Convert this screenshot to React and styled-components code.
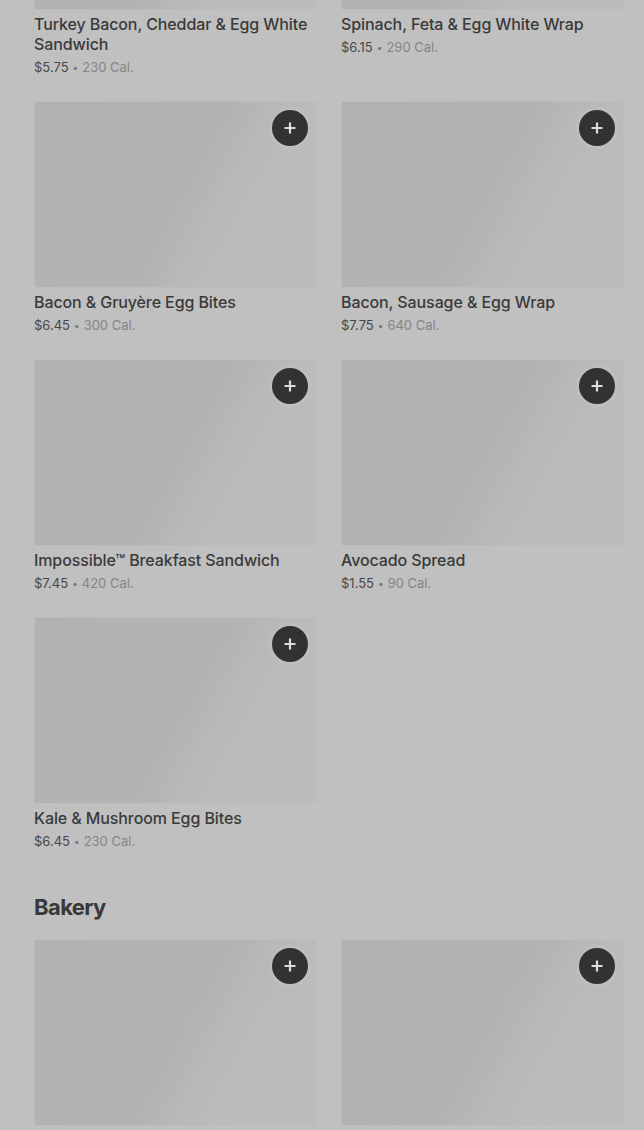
import * as React from 'react';
import styled, { createGlobalStyle } from 'styled-components';

const breakfast = [
  { name: 'Turkey Bacon, Cheddar & Egg White Sandwich', price: '$5.75', cal: '230 Cal.' },
  { name: 'Spinach, Feta & Egg White Wrap', price: '$6.15', cal: '290 Cal.' },
  { name: 'Bacon & Gruyère Egg Bites', price: '$6.45', cal: '300 Cal.' },
  { name: 'Bacon, Sausage & Egg Wrap', price: '$7.75', cal: '640 Cal.' },
  { name: 'Impossible™ Breakfast Sandwich', price: '$7.45', cal: '420 Cal.' },
  { name: 'Avocado Spread', price: '$1.55', cal: '90 Cal.' },
  { name: 'Kale & Mushroom Egg Bites', price: '$6.45', cal: '230 Cal.' },
];

const bakery = [
  { name: 'Butter Croissant', price: '$3.45', cal: '250 Cal.' },
  { name: 'Chocolate Croissant', price: '$3.95', cal: '300 Cal.' },
];

function PlusIcon() {
  return (
    <svg width="14" height="14" viewBox="0 0 14 14" fill="none">
      <path d="M7 1.5v11M1.5 7h11" stroke="#dcdcdc" strokeWidth="2.2" />
    </svg>
  );
}

function ItemCard({ item }) {
  return (
    <Card>
      <Photo>
        <AddButton aria-label={`Add ${item.name}`}>
          <PlusIcon />
        </AddButton>
      </Photo>
      <Title>{item.name}</Title>
      <Meta>
        <Price>{item.price}</Price>
        <Dot>•</Dot>
        <Calories>{item.cal}</Calories>
      </Meta>
    </Card>
  );
}

export default function App() {
  return (
    <>
      <GlobalStyle />
      <Page>
        <Grid>
          {breakfast.map((item) => (
            <ItemCard key={item.name} item={item} />
          ))}
        </Grid>
        <Section>
          <Heading>Bakery</Heading>
          <Grid>
            {bakery.map((item) => (
              <ItemCard key={item.name} item={item} />
            ))}
          </Grid>
        </Section>
      </Page>
    </>
  );
}

const GlobalStyle = createGlobalStyle`
  html, body {
    margin: 0;
    padding: 0;
    background: #c0c0c0;
    overflow: hidden;
  }
  body {
    font-family: Inter, "Noto Sans", sans-serif;
  }
`;

const Page = styled.main`
  padding: 0 20px 40px 34px;
  margin-top: -177px;
`;

const Grid = styled.div`
  display: grid;
  grid-template-columns: 1fr 1fr;
  column-gap: 24px;
  row-gap: 25px;
`;

const Section = styled.section`
  margin-top: 43px;
`;

const Heading = styled.h2`
  margin: 0 0 18px;
  font-size: 22px;
  line-height: 28px;
  font-weight: 700;
  letter-spacing: -0.6px;
  color: #383838;
`;

const Card = styled.div`
  display: flex;
  flex-direction: column;
`;

const Photo = styled.div`
  position: relative;
  height: 187px;
  box-sizing: border-box;
  border: 1px solid #bdbdbd;
  background: linear-gradient(
    119deg,
    #b2b2b2 0%,
    #b3b3b3 54%,
    #b8b8b8 62%,
    #bbbbbb 72%,
    #bcbcbc 100%
  );
`;

const AddButton = styled.button`
  position: absolute;
  top: 8px;
  right: 8px;
  width: 36px;
  height: 36px;
  border: none;
  border-radius: 50%;
  padding: 0;
  background: #323232;
  box-shadow: 0 0 0 3px rgba(255, 255, 255, 0.06);
  display: flex;
  align-items: center;
  justify-content: center;
  cursor: pointer;
`;

const Title = styled.div`
  margin-top: 4px;
  font-size: 16px;
  line-height: 20px;
  font-weight: 500;
  letter-spacing: -0.1px;
  color: #3a3a3a;
`;

const Meta = styled.div`
  margin-top: 4px;
  display: flex;
  align-items: center;
  gap: 4px;
  font-size: 13px;
  line-height: 18px;
`;

const Price = styled.span`
  color: #484848;
`;

const Dot = styled.span`
  color: #7a7a7a;
  font-size: 10px;
`;

const Calories = styled.span`
  color: #858585;
`;
